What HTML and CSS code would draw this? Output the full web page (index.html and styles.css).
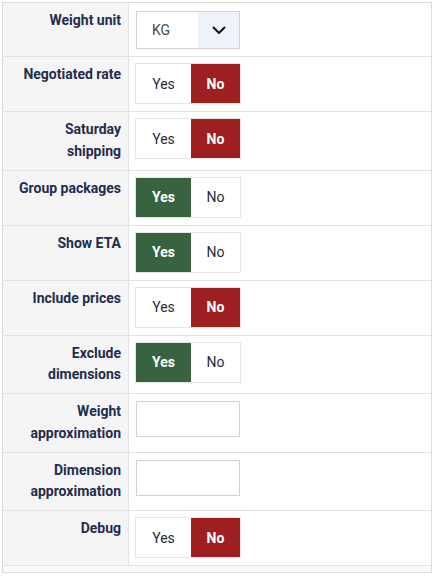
FILE: index.html
```html
<!DOCTYPE html>
<html>
<head>
<meta charset="utf-8">
<link rel="stylesheet" href="styles.css">
</head>
<body>
<div class="panel">
  <table class="form">
    <tr>
      <th class="label">Weight unit</th>
      <td class="value value-select">
        <div class="select">
          <span class="select-text">KG</span>
          <span class="select-arrow"><svg width="14" height="8" viewBox="0 0 14 8"><path d="M1 1 L7 7 L13 1" fill="none" stroke="#111" stroke-width="2"/></svg></span>
        </div>
      </td>
    </tr>
    <tr>
      <th class="label">Negotiated rate</th>
      <td class="value"><div class="toggle"><span class="opt yes">Yes</span><span class="opt no on-no">No</span></div></td>
    </tr>
    <tr>
      <th class="label">Saturday<br>shipping</th>
      <td class="value"><div class="toggle"><span class="opt yes">Yes</span><span class="opt no on-no">No</span></div></td>
    </tr>
    <tr>
      <th class="label">Group packages</th>
      <td class="value"><div class="toggle"><span class="opt yes on-yes">Yes</span><span class="opt no">No</span></div></td>
    </tr>
    <tr>
      <th class="label">Show ETA</th>
      <td class="value"><div class="toggle"><span class="opt yes on-yes">Yes</span><span class="opt no">No</span></div></td>
    </tr>
    <tr>
      <th class="label">Include prices</th>
      <td class="value"><div class="toggle"><span class="opt yes">Yes</span><span class="opt no on-no">No</span></div></td>
    </tr>
    <tr>
      <th class="label">Exclude<br>dimensions</th>
      <td class="value"><div class="toggle"><span class="opt yes on-yes">Yes</span><span class="opt no">No</span></div></td>
    </tr>
    <tr>
      <th class="label">Weight<br>approximation</th>
      <td class="value"><div class="input"></div></td>
    </tr>
    <tr>
      <th class="label">Dimension<br>approximation</th>
      <td class="value"><div class="input"></div></td>
    </tr>
    <tr>
      <th class="label">Debug</th>
      <td class="value"><div class="toggle"><span class="opt yes">Yes</span><span class="opt no on-no">No</span></div></td>
    </tr>
  </table>
</div>
</body>
</html>
```

FILE: styles.css
```css
html, body {
  margin: 0;
  padding: 0;
  background: #ffffff;
}
body {
  padding: 2px;
  font-family: Roboto, "Liberation Sans", sans-serif;
}
.panel {
  width: 428px;
  border: 1px solid #dcdcdc;
  padding-bottom: 6px;
  background: #fafafa;
}
.form {
  border-collapse: collapse;
  width: 100%;
  background: #ffffff;
}
.form tr {
  border-bottom: 1px solid #e2e2e2;
}
.label {
  width: 118px;
  background: #f5f5f5;
  border-right: 1px solid #e2e2e2;
  text-align: right;
  vertical-align: top;
  padding: 7px 7px 7.5px 0;
  font-size: 14px;
  line-height: 21.5px;
  font-weight: 700;
  color: #1f2d4e;
}
.value {
  vertical-align: top;
  padding: 7px 7px 8px 7px;
}
.value-select {
  padding-top: 8px;
  padding-bottom: 7px;
}
.select {
  display: flex;
  width: 102px;
  height: 36px;
  border: 1px solid #cdd1d6;
  background: #ffffff;
}
.select-text {
  flex: 1;
  display: flex;
  align-items: center;
  padding-left: 15px;
  font-size: 14px;
  color: #4a4a4a;
}
.select-arrow {
  width: 41px;
  display: flex;
  align-items: center;
  justify-content: center;
  background: #eef3fa;
}
.toggle {
  display: flex;
  width: 104px;
  height: 39px;
  box-shadow: 0 0 0 1px #e6e6e6, 0 1px 1px rgba(0,0,0,0.08);
  font-size: 14px;
}
.opt {
  display: flex;
  align-items: center;
  justify-content: center;
  color: #1f2a3a;
  background: #ffffff;
}
.yes { width: 55px; }
.no { width: 49px; }
.on-no {
  background: #9e1f20;
  color: #ffffff;
  font-weight: 700;
}
.on-yes {
  background: #376341;
  color: #ffffff;
  font-weight: 700;
}
.input {
  width: 102px;
  height: 34px;
  border: 1px solid #cdd1d6;
  background: #ffffff;
}
```
